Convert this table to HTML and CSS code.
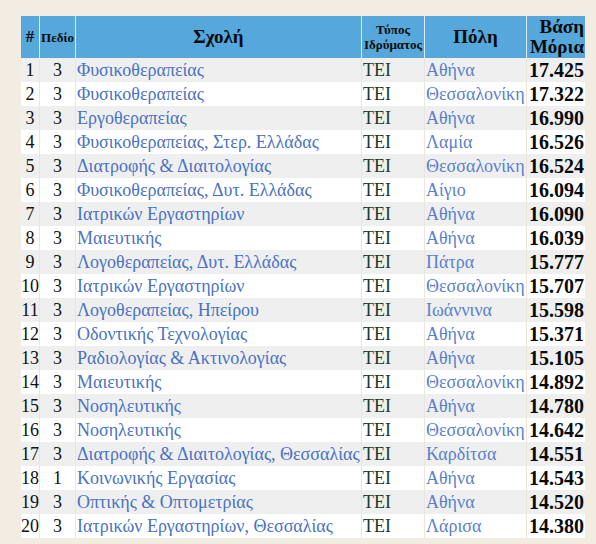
FILE: index.html
```html
<!DOCTYPE html>
<html>
<head>
<meta charset="utf-8">
<title>Βάσεις</title>
<link rel="stylesheet" href="styles.css">
</head>
<body>
<table class="grid">
<thead>
<tr>
<th class="c-num">#</th>
<th class="c-field small">Πεδίο</th>
<th class="c-school">Σχολή</th>
<th class="c-type small">Τύπος<br>Ιδρύματος</th>
<th class="c-city">Πόλη</th>
<th class="c-score">Βάση<br>Μόρια</th>
</tr>
</thead>
<tbody>
<tr><td class="c-num">1</td><td class="c-field">3</td><td class="c-school">Φυσικοθεραπείας</td><td class="c-type">TEI</td><td class="c-city">Αθήνα</td><td class="c-score">17.425</td></tr>
<tr><td class="c-num">2</td><td class="c-field">3</td><td class="c-school">Φυσικοθεραπείας</td><td class="c-type">TEI</td><td class="c-city">Θεσσαλονίκη</td><td class="c-score">17.322</td></tr>
<tr><td class="c-num">3</td><td class="c-field">3</td><td class="c-school">Εργοθεραπείας</td><td class="c-type">TEI</td><td class="c-city">Αθήνα</td><td class="c-score">16.990</td></tr>
<tr><td class="c-num">4</td><td class="c-field">3</td><td class="c-school">Φυσικοθεραπείας, Στερ. Ελλάδας</td><td class="c-type">TEI</td><td class="c-city">Λαμία</td><td class="c-score">16.526</td></tr>
<tr><td class="c-num">5</td><td class="c-field">3</td><td class="c-school">Διατροφής &amp; Διαιτολογίας</td><td class="c-type">TEI</td><td class="c-city">Θεσσαλονίκη</td><td class="c-score">16.524</td></tr>
<tr><td class="c-num">6</td><td class="c-field">3</td><td class="c-school">Φυσικοθεραπείας, Δυτ. Ελλάδας</td><td class="c-type">TEI</td><td class="c-city">Αίγιο</td><td class="c-score">16.094</td></tr>
<tr><td class="c-num">7</td><td class="c-field">3</td><td class="c-school">Ιατρικών Εργαστηρίων</td><td class="c-type">TEI</td><td class="c-city">Αθήνα</td><td class="c-score">16.090</td></tr>
<tr><td class="c-num">8</td><td class="c-field">3</td><td class="c-school">Μαιευτικής</td><td class="c-type">TEI</td><td class="c-city">Αθήνα</td><td class="c-score">16.039</td></tr>
<tr><td class="c-num">9</td><td class="c-field">3</td><td class="c-school">Λογοθεραπείας, Δυτ. Ελλάδας</td><td class="c-type">TEI</td><td class="c-city">Πάτρα</td><td class="c-score">15.777</td></tr>
<tr><td class="c-num">10</td><td class="c-field">3</td><td class="c-school">Ιατρικών Εργαστηρίων</td><td class="c-type">TEI</td><td class="c-city">Θεσσαλονίκη</td><td class="c-score">15.707</td></tr>
<tr><td class="c-num">11</td><td class="c-field">3</td><td class="c-school">Λογοθεραπείας, Ηπείρου</td><td class="c-type">TEI</td><td class="c-city">Ιωάννινα</td><td class="c-score">15.598</td></tr>
<tr><td class="c-num">12</td><td class="c-field">3</td><td class="c-school">Οδοντικής Τεχνολογίας</td><td class="c-type">TEI</td><td class="c-city">Αθήνα</td><td class="c-score">15.371</td></tr>
<tr><td class="c-num">13</td><td class="c-field">3</td><td class="c-school">Ραδιολογίας &amp; Ακτινολογίας</td><td class="c-type">TEI</td><td class="c-city">Αθήνα</td><td class="c-score">15.105</td></tr>
<tr><td class="c-num">14</td><td class="c-field">3</td><td class="c-school">Μαιευτικής</td><td class="c-type">TEI</td><td class="c-city">Θεσσαλονίκη</td><td class="c-score">14.892</td></tr>
<tr><td class="c-num">15</td><td class="c-field">3</td><td class="c-school">Νοσηλευτικής</td><td class="c-type">TEI</td><td class="c-city">Αθήνα</td><td class="c-score">14.780</td></tr>
<tr><td class="c-num">16</td><td class="c-field">3</td><td class="c-school">Νοσηλευτικής</td><td class="c-type">TEI</td><td class="c-city">Θεσσαλονίκη</td><td class="c-score">14.642</td></tr>
<tr><td class="c-num">17</td><td class="c-field">3</td><td class="c-school">Διατροφής &amp; Διαιτολογίας, Θεσσαλίας</td><td class="c-type">TEI</td><td class="c-city">Καρδίτσα</td><td class="c-score">14.551</td></tr>
<tr><td class="c-num">18</td><td class="c-field">1</td><td class="c-school">Κοινωνικής Εργασίας</td><td class="c-type">TEI</td><td class="c-city">Αθήνα</td><td class="c-score">14.543</td></tr>
<tr><td class="c-num">19</td><td class="c-field">3</td><td class="c-school">Οπτικής &amp; Οπτομετρίας</td><td class="c-type">TEI</td><td class="c-city">Αθήνα</td><td class="c-score">14.520</td></tr>
<tr><td class="c-num">20</td><td class="c-field">3</td><td class="c-school">Ιατρικών Εργαστηρίων, Θεσσαλίας</td><td class="c-type">TEI</td><td class="c-city">Λάρισα</td><td class="c-score">14.380</td></tr>
</tbody>
</table>
</body>
</html>
```
FILE: styles.css
```css
html, body {
  margin: 0;
  padding: 0;
  background: #f3ece2;
}
body {
  padding: 16px 0 0 21px;
  font-family: "Liberation Serif", "Times New Roman", serif;
}
.grid {
  border-collapse: collapse;
  table-layout: fixed;
  width: 563px;
}
.grid th, .grid td {
  padding: 0;
  white-space: nowrap;
  overflow: visible;
}
.grid th {
  background: #55a7dc;
  color: #0b0b0b;
  font-weight: bold;
  font-size: 19px;
  height: 42px;
  line-height: 20px;
  border-right: 1px solid #dcecf6;
  text-align: center;
  vertical-align: middle;
}
.grid th:last-child { border-right: 0; }
.grid th.small { font-size: 13px; line-height: 15px; }
.grid td {
  height: 24px;
  font-size: 18px;
  line-height: 24px;
  border-right: 1px solid #ece5d9;
  vertical-align: middle;
}
.grid td:last-child { border-right: 0; }
.grid tbody tr:nth-child(odd) td { background: #efefef; }
.grid tbody tr:nth-child(even) td { background: #ffffff; }
.c-num { width: 18px; }
.c-field { width: 35px; }
.c-school { width: 285px; }
.c-type { width: 62px; }
.c-city { width: 101px; }
.c-score { width: 57px; }
td.c-num { text-align: center; color: #111; }
td.c-field { text-align: center; color: #111; }
td.c-school { padding-left: 1px; color: #4a72c4; }
td.c-type { padding-left: 1px; color: #22382a; }
td.c-city { padding-left: 1px; color: #5a7fcf; }
td.c-score { text-align: right; padding-right: 1px; font-weight: bold; font-size: 20px; color: #0a0a0a; }
th.c-score { text-align: right; padding-right: 1px; }
th.c-num { text-align: center; font-size: 17px; }
```
